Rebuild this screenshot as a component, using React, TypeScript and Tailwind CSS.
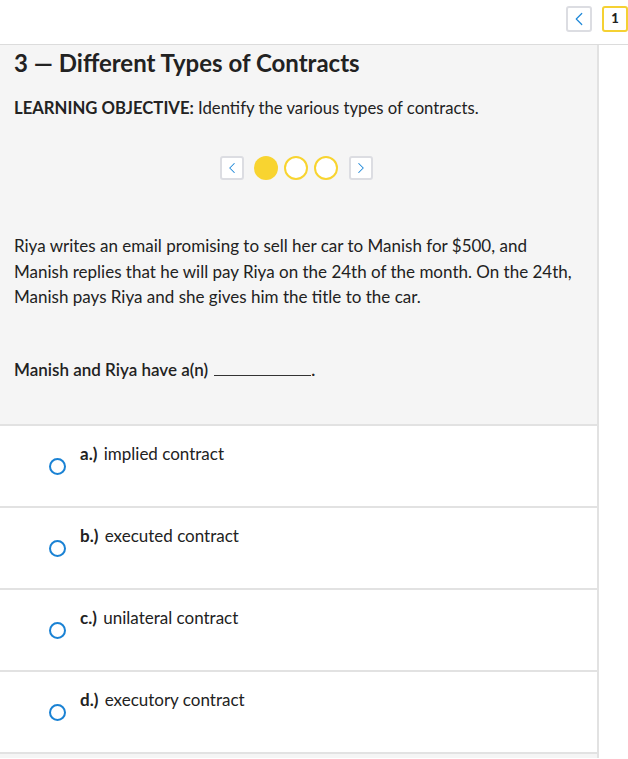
import { ChevronLeft, ChevronRight } from 'lucide-react';

const options = [
  { key: 'a.)', text: 'implied contract' },
  { key: 'b.)', text: 'executed contract' },
  { key: 'c.)', text: 'unilateral contract' },
  { key: 'd.)', text: 'executory contract' },
];

export default function App() {
  return (
    <div className="min-h-[759px] bg-white text-[#222] font-['Lato',_sans-serif]">
      {/* Top bar */}
      <div className="h-[45px] border-b border-[#dcdcdc] flex items-start justify-end pt-[6px] gap-[10px]">
        <button className="w-[26px] h-[26px] rounded-[3px] border-2 border-[#dcdde2] bg-white flex items-center justify-center">
          <ChevronLeft className="w-[22px] h-[22px] text-[#1e88d8]" strokeWidth={1.3} />
        </button>
        <div className="w-[26px] h-[26px] rounded-[3px] border-2 border-[#f5d133] bg-white flex items-center justify-center text-[13px] font-black text-[#222]">
          1
        </div>
      </div>

      <div className="flex">
        <div className="w-[599px] border-r-2 border-[#e2e2e2]">
          {/* Question area */}
          <div className="bg-[#f5f5f5] h-[379px] px-[14px] pt-[1px]">
            <h1 className="text-[24px] font-bold leading-[34px] text-[#222]">
              3 — Different Types of Contracts
            </h1>
            <p className="mt-[16px] text-[16.7px] leading-[24px]">
              <span className="font-bold">LEARNING OBJECTIVE:</span> Identify the various types of contracts.
            </p>

            <div className="mt-[36px] ml-[206px] flex items-center gap-[6px]">
              <button className="w-[24px] h-[24px] rounded-[3px] border-2 border-[#dcdde2] bg-white flex items-center justify-center mr-[4px]">
                <ChevronLeft className="w-[18px] h-[18px] text-[#1e88d8]" strokeWidth={1.4} />
              </button>
              <span className="w-[24px] h-[24px] rounded-full bg-[#f8d430]" />
              <span className="w-[24px] h-[24px] rounded-full border-2 border-[#f8d430] bg-white" />
              <span className="w-[24px] h-[24px] rounded-full border-2 border-[#f8d430] bg-white" />
              <button className="w-[24px] h-[24px] rounded-[3px] border-2 border-[#dcdde2] bg-white flex items-center justify-center ml-[5px]">
                <ChevronRight className="w-[18px] h-[18px] text-[#1e88d8]" strokeWidth={1.4} />
              </button>
            </div>

            <p className="mt-[53px] text-[17px] leading-[25.5px] pr-[10px]">
              Riya writes an email promising to sell her car to Manish for $500, and Manish replies that he will pay Riya on the 24th of the month. On the 24th, Manish pays Riya and she gives him the title to the car.
            </p>

            <p className="mt-[48px] text-[17px] leading-[24px] font-semibold">
              Manish and Riya have a(n){' '}
              <span className="inline-block w-[97px] border-b border-[#333] align-baseline ml-[2px]" />.
            </p>
          </div>

          {/* Answer options */}
          {options.map((o) => (
            <div key={o.key} className="h-[82px] border-t-2 border-[#e2e2e2] flex items-start pt-[16px] pl-[49px]">
              <span className="mt-[16px] w-[17px] h-[17px] rounded-full border-2 border-[#1a82d4]" />
              <span className="ml-[14px] text-[17px] leading-[24px]">
                <span className="font-bold mr-[2px]">{o.key}</span> {o.text}
              </span>
            </div>
          ))}
          <div className="border-t-2 border-[#e2e2e2] h-[6px] bg-[#f5f5f5]" />
        </div>
        <div className="flex-1" />
      </div>
    </div>
  );
}
